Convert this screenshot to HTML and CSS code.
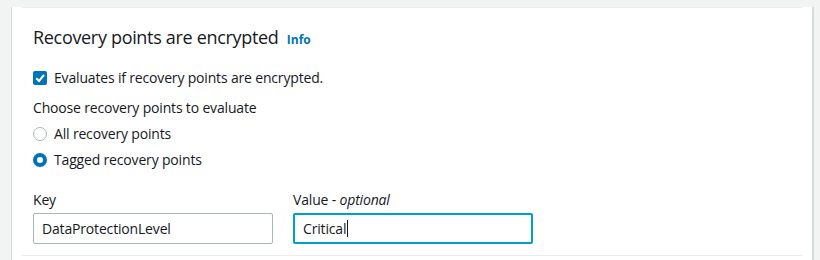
FILE: index.html
```html
<!DOCTYPE html>
<html>
<head>
<meta charset="utf-8">
<link rel="stylesheet" href="styles.css">
</head>
<body>
<div class="page">
  <div class="panel">
    <section class="section">
      <h2 class="title">Recovery points are encrypted <a class="info">Info</a></h2>
      <label class="check-row">
        <span class="checkbox"><svg width="14" height="14" viewBox="0 0 14 14"><path d="M3.2 7.2 L6 10 L11 4" fill="none" stroke="#fff" stroke-width="2"/></svg></span>
        <span>Evaluates if recovery points are encrypted.</span>
      </label>
      <div class="label choose">Choose recovery points to evaluate</div>
      <label class="radio-row first"><span class="radio"></span><span>All recovery points</span></label>
      <label class="radio-row"><span class="radio checked"></span><span>Tagged recovery points</span></label>
      <div class="fields">
        <div class="field">
          <div class="label">Key</div>
          <div class="input">DataProtectionLevel</div>
        </div>
        <div class="field">
          <div class="label">Value - <i>optional</i></div>
          <div class="input focused">Critical<span class="caret"></span></div>
        </div>
      </div>
    </section>
  </div>
</div>
</body>
</html>
```
FILE: styles.css
```css
* { box-sizing: border-box; }
html, body { margin: 0; padding: 0; }
body {
  background: #f2f3f3;
  font-family: "Open Sans", "Noto Sans", sans-serif;
  color: #16191f;
  font-size: 14px;
  letter-spacing: -0.17px;
}
.page { height: 260px; overflow: hidden; }
.panel {
  margin-left: 11px;
  width: 803px;
  height: 260px;
  background: #fff;
  border-left: 1px solid #d5dbdb;
  border-right: 2px solid #d5dbdb;
  padding: 0 10px;
}
.section {
  margin-top: 7px;
  border-top: 1px solid #eaeded;
  border-bottom: 1px solid #eaeded;
  padding: 18px 11px 11px;
}
.title {
  margin: 0;
  font-size: 18px;
  font-weight: 400;
  line-height: 22px;
  letter-spacing: -0.32px;
}
.info {
  font-size: 12px;
  font-weight: 700;
  color: #0073bb;
  margin-left: 4px;
  letter-spacing: 0;
}
.check-row, .radio-row {
  display: flex;
  align-items: center;
  gap: 7px;
  line-height: 20px;
}
.check-row { margin-top: 17px; }
.checkbox {
  width: 14px; height: 14px;
  background: #0073bb;
  border-radius: 2px;
  display: flex;
}
.label { line-height: 20px; }
.choose { margin-top: 10px; }
.radio-row { margin-top: 6px; }
.radio {
  width: 14px; height: 14px;
  border-radius: 50%;
  border: 1px solid #aab7b8;
  background: #fff;
}
.radio.checked { border: 4px solid #0073bb; }
.fields {
  display: flex;
  gap: 20px;
  margin-top: 20px;
}
.field { width: 240px; }
.input {
  margin-top: 3px;
  height: 31px;
  border: 1px solid #aab7b8;
  border-radius: 2px;
  padding: 0 8px;
  line-height: 29px;
  display: flex;
  align-items: center;
}
.input.focused {
  border: 2px solid #00a1c9;
  padding: 0 8px;
}
.caret {
  display: inline-block;
  width: 1px;
  height: 17px;
  background: #16191f;
  margin-left: 1px;
}
```
